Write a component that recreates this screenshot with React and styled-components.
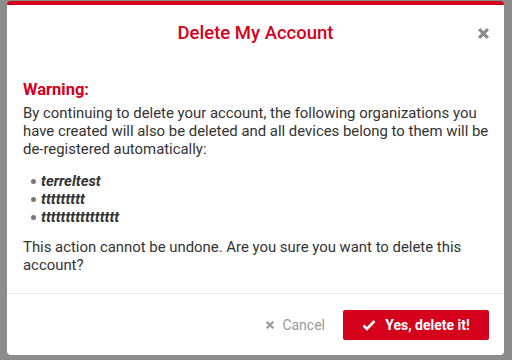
import styled, { createGlobalStyle } from "styled-components";

const RED = "#d5001c";

const GlobalStyle = createGlobalStyle`
  html, body {
    margin: 0;
    padding: 0;
    background: #8c8c8c;
    font-family: Roboto, "Liberation Sans", Arial, sans-serif;
  }
`;

const Backdrop = styled.div`
  width: 512px;
  height: 360px;
  box-sizing: border-box;
  padding: 1px 8px 5px 7px;
  display: flex;
`;

const Modal = styled.div`
  flex: 1;
  display: flex;
  flex-direction: column;
  background: #fff;
  border-top: 4px solid ${RED};
  border-radius: 4px;
  overflow: hidden;
`;

const Header = styled.div`
  position: relative;
  height: 56px;
  display: flex;
  align-items: center;
  justify-content: center;
`;

const Title = styled.h2`
  margin: 0;
  font-size: 18.5px;
  font-weight: 500;
  color: ${RED};
`;

const Close = styled.button`
  position: absolute;
  right: 14px;
  top: 22px;
  width: 13px;
  height: 13px;
  padding: 0;
  border: 0;
  background: none;
  display: flex;
  align-items: center;
  justify-content: center;
`;

const Body = styled.div`
  flex: 1;
  padding: 19px 12px 0 16px;
  color: #333;
  font-size: 14.9px;
  line-height: 18px;
`;

const Warning = styled.div`
  color: ${RED};
  font-weight: 700;
  font-size: 16.5px;
  line-height: 20px;
  margin-bottom: 4px;
`;

const Para = styled.p`
  margin: 0;
`;

const OrgList = styled.ul`
  margin: 14px 0 12px 0;
  padding: 0 0 0 8px;
  list-style: none;
`;

const OrgItem = styled.li`
  display: flex;
  align-items: center;
  gap: 5px;
  font-weight: 700;
  font-style: italic;
  &::before {
    content: "";
    width: 5px;
    height: 5px;
    border-radius: 50%;
    background: #777;
  }
`;

const Footer = styled.div`
  border-top: 1px solid #eeeeee;
  height: 61px;
  display: flex;
  align-items: center;
  justify-content: flex-end;
  gap: 18px;
  padding: 0 15px;
`;

const Button = styled.button`
  display: flex;
  align-items: center;
  justify-content: center;
  gap: ${(p) => (p.$primary ? "9px" : "7px")};
  height: 30px;
  border: 0;
  border-radius: 2px;
  font-family: inherit;
  padding: 0;
  width: ${(p) => (p.$primary ? "146px" : "auto")};
  font-size: 14px;
  background: ${(p) => (p.$primary ? RED : "transparent")};
  color: ${(p) => (p.$primary ? "#fff" : "#999")};
  font-weight: ${(p) => (p.$primary ? 700 : 400)};
`;

const XIcon = ({ size = 12, color = "#8a8a8a", stroke = 3 }) => (
  <svg width={size} height={size} viewBox="0 0 12 12">
    <path d="M2 2L10 10M10 2L2 10" stroke={color} strokeWidth={stroke} strokeLinecap="butt" />
  </svg>
);

const CheckIcon = () => (
  <svg width="14" height="12" viewBox="0 0 14 12">
    <path d="M1.5 6.5L5 10L12.5 2" stroke="#fff" strokeWidth="2.6" fill="none" />
  </svg>
);

const orgs = ["terreltest", "ttttttttt", "tttttttttttttttt"];

export default function App() {
  return (
    <>
      <GlobalStyle />
      <Backdrop>
        <Modal>
          <Header>
            <Title>Delete My Account</Title>
            <Close>
              <XIcon size={13} />
            </Close>
          </Header>
          <Body>
            <Warning>Warning:</Warning>
            <Para>
              By continuing to delete your account, the following organizations you
              have created will also be deleted and all devices belong to them will be
              de-registered automatically:
            </Para>
            <OrgList>
              {orgs.map((o) => (
                <OrgItem key={o}>{o}</OrgItem>
              ))}
            </OrgList>
            <Para>
              This action cannot be undone. Are you sure you want to delete this
              account?
            </Para>
          </Body>
          <Footer>
            <Button>
              <XIcon size={10} color="#999" stroke={2.6} />
              Cancel
            </Button>
            <Button $primary>
              <CheckIcon />
              Yes, delete it!
            </Button>
          </Footer>
        </Modal>
      </Backdrop>
    </>
  );
}
